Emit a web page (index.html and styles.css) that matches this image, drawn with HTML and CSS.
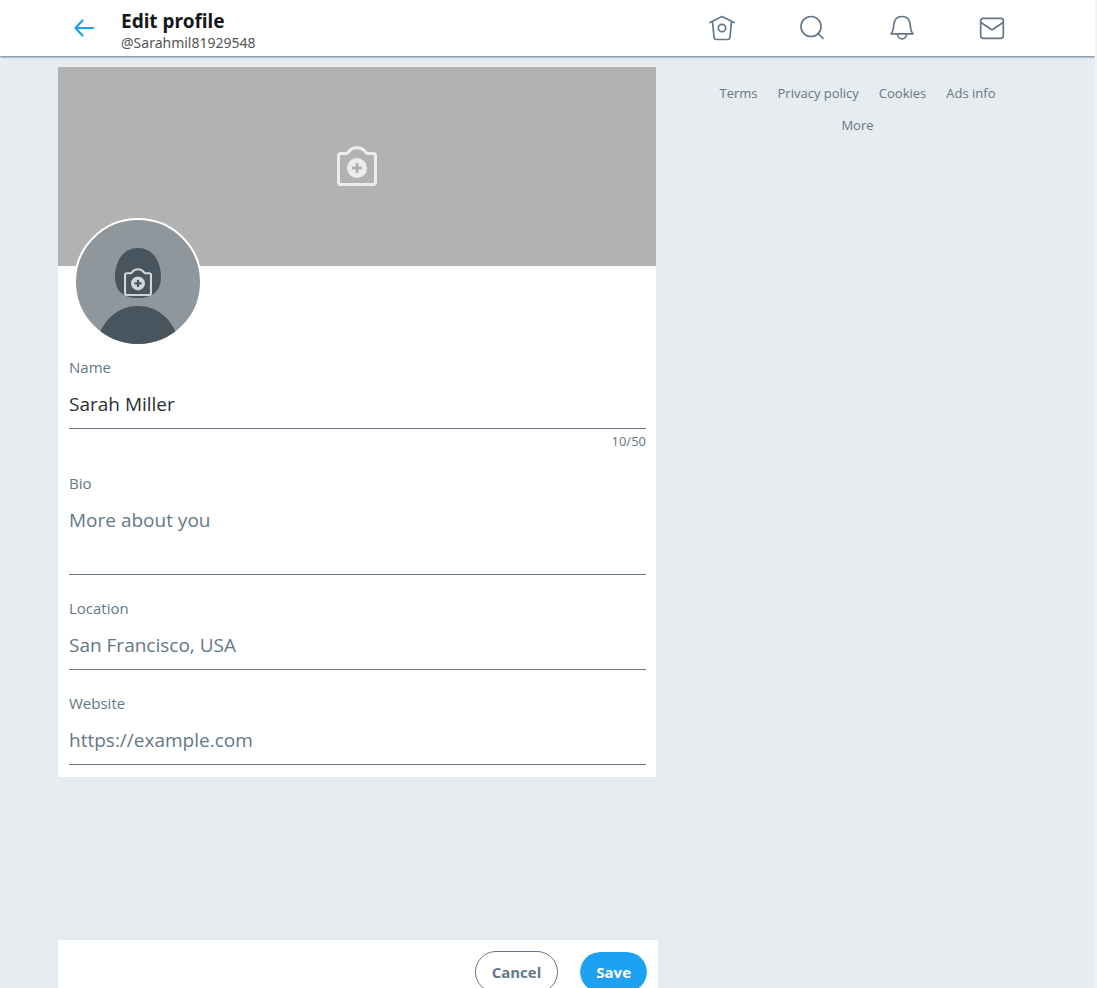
FILE: index.html
```html
<!DOCTYPE html>
<html lang="en">
<head>
<meta charset="utf-8">
<meta name="viewport" content="width=device-width, initial-scale=1">
<title>Edit profile</title>
<link rel="stylesheet" href="styles.css">
</head>
<body>
<svg class="sprite" aria-hidden="true">
  <symbol id="camera" viewBox="0 0 40 40">
    <path d="M4 7.500h5.500q1-.2 1.800-1.300c4-6 13.400-6 17.400 0q.8 1.100 1.800 1.300H36q2.500 0 2.500 2.500v26q0 2.500-2.500 2.500H4q-2.500 0-2.500-2.500V10Q1.500 7.500 4 7.500z" fill="none" stroke="currentColor" stroke-width="3" stroke-linejoin="round"/>
    <path fill-rule="evenodd" fill="currentColor" d="M20 12a10 10 0 1 0 0 20a10 10 0 0 0 0-20zM18.500 17h3v3.500H25v3h-3.500V27h-3v-3.500H15v-3h3.500z"/>
  </symbol>
</svg>
<header class="topbar">
  <div class="topbar-inner">
    <div class="heading">
      <button class="back" type="button" aria-label="Back">
        <svg width="20" height="18" viewBox="0 0 20 18" fill="none" stroke="currentColor" stroke-width="2.200" stroke-linecap="round" stroke-linejoin="round"><path d="M19 9H1.500M8.500 1.500L1.500 9l7 7.500"/></svg>
      </button>
      <div class="heading-text">
        <h1 class="title">Edit profile</h1>
        <p class="handle">@Sarahmil81929548</p>
      </div>
    </div>
    <nav class="nav" aria-label="Primary">
      <a class="nav-link" href="#" aria-label="Home"><svg class="icon" viewBox="0 0 26 26"><path d="M1 7.500L13 1.500l12 6M3.500 6.500l1.500 15.500q.2 2.500 2.500 2.500h11q2.300 0 2.500-2.500l1.500-15.500"/><circle cx="13" cy="13" r="3.700"/></svg></a>
      <a class="nav-link" href="#" aria-label="Search"><svg class="icon" viewBox="0 0 26 26"><circle cx="12" cy="11.500" r="10"/><path d="M19 18.500l5 5"/></svg></a>
      <a class="nav-link" href="#" aria-label="Notifications"><svg class="icon" viewBox="0 0 26 26"><path d="M2 18.800h22c-2-2-2.400-4-2.800-9C20.800 4.500 17.500 1.500 13 1.500S5.200 4.500 4.800 9.800c-.4 5-.8 7-2.800 9zM8.500 19c0 6.500 9 6.500 9 0"/></svg></a>
      <a class="nav-link" href="#" aria-label="Messages"><svg class="icon" viewBox="0 0 26 26"><rect x="1.700" y="3.300" width="22.600" height="20" rx="2.500"/><path d="M2 7.500l9.500 6.500q1.500 1 3 0l9.500-6.500"/></svg></a>
    </nav>
  </div>
</header>
<div class="page">
  <main class="main">
    <form class="card" id="profile">
      <button class="banner" type="button" aria-label="Add a header photo"><svg class="camera-large"><use href="#camera"/></svg></button>
      <button class="avatar" type="button" aria-label="Add a profile photo">
        <svg class="person" viewBox="0 0 124 124"><path fill="#48545e" d="M62 28c16 0 23 15 23 29 0 14-8 21-23 21S39 71 39 57c0-14 7-29 23-29zM23 116c5-17 20-30 39-30s34 13 39 30v10H23z"/></svg>
        <svg class="camera-small"><use href="#camera"/></svg>
      </button>
      <div class="fields">
        <div class="field">
          <label class="label" for="name">Name</label>
          <input class="control" id="name" type="text" value="Sarah Miller" maxlength="50">
          <div class="counter">10/50</div>
        </div>
        <div class="field">
          <label class="label" for="bio">Bio</label>
          <textarea class="control control-multi" id="bio" placeholder="More about you"></textarea>
        </div>
        <div class="field">
          <label class="label" for="location">Location</label>
          <input class="control" id="location" type="text" placeholder="San Francisco, USA">
        </div>
        <div class="field">
          <label class="label" for="website">Website</label>
          <input class="control" id="website" type="url" placeholder="https://example.com">
        </div>
      </div>
    </form>
    <div class="actions">
      <button class="button" type="button">Cancel</button>
      <button class="button button-primary" type="submit" form="profile">Save</button>
    </div>
  </main>
  <aside class="links">
    <a class="link" href="#">Terms</a>
    <a class="link" href="#">Privacy policy</a>
    <a class="link" href="#">Cookies</a>
    <a class="link" href="#">Ads info</a>
    <a class="link" href="#">More</a>
  </aside>
</div>
</body>
</html>
```
FILE: styles.css
```css
* { box-sizing: border-box; }

body {
  margin: 0;
  height: 100vh;
  display: flex;
  flex-direction: column;
  overflow: hidden;
  border-right: 2px solid #f1f2f3;
  background: #e6ecf0;
  color: #657786;
  font-family: "Open Sans", "Noto Sans", sans-serif;
  font-size: 15px;
}

button {
  padding: 0;
  border: 0;
  background: none;
  font: inherit;
  cursor: pointer;
}

a { color: inherit; text-decoration: none; }
svg { display: block; }
.sprite { display: none; }

.topbar {
  flex: none;
  background: #fff;
  box-shadow: 0 1px 2px #657786;
}

.topbar-inner,
.page {
  display: grid;
  grid-template-columns: minmax(0, 1fr) 363px;
  column-gap: 18px;
  margin: 0 56px 0 58px;
}

.topbar-inner { height: 56px; }

.heading { display: flex; align-items: center; gap: 27px; padding-left: 16px; }
.heading-text { padding-top: 6px; }
.back { color: #1da1f2; }

.title {
  margin: 0;
  color: #14171a;
  font-family: "Noto Sans", sans-serif;
  font-size: 19px;
  line-height: 24px;
}

.handle {
  margin: 0;
  color: #555;
  font-family: "Noto Sans", sans-serif;
  font-size: 14px;
  line-height: 20px;
}

.nav { display: grid; grid-template-columns: repeat(4, 90px); padding-left: 1px; }
.nav-link { display: grid; place-items: center; }

.icon {
  width: 26px;
  height: 26px;
  fill: none;
  stroke: #657786;
  stroke-width: 1.7;
  stroke-linecap: round;
  stroke-linejoin: round;
}

.page { flex: 1; min-height: 0; padding-top: 11px; }

.main { display: flex; flex-direction: column; justify-content: space-between; min-height: 0; }

.card { position: relative; flex: none; margin-right: 2px; background: #fff; }

.banner {
  display: grid;
  place-items: center;
  width: 100%;
  height: 199px;
  padding-bottom: 1px;
  background: #b2b2b2;
}

.camera-large { width: 40px; height: 40px; color: #ededed; }

.avatar {
  position: absolute;
  top: 151px;
  left: 16px;
  display: grid;
  place-items: center;
  width: 128px;
  height: 128px;
  border: 2px solid #fff;
  border-radius: 50%;
  background: #8f969c;
  overflow: hidden;
}

.person,
.camera-small { grid-area: 1 / 1; }
.person { width: 124px; height: 124px; }
.camera-small { width: 28px; height: 28px; color: #d2d5d8; }

.fields { padding: 90px 10px 12px 11px; }
.field + .field { padding-top: 22px; }
.label { display: block; padding-bottom: 2px; line-height: 22px; }

.control {
  display: block;
  width: 100%;
  height: 49px;
  padding: 12px 0;
  border: 0;
  border-bottom: 1px solid #657786;
  border-radius: 0;
  outline: 0;
  background: none;
  color: #292f33;
  font: inherit;
  font-size: 19px;
  line-height: 24px;
}

.control::placeholder { color: #657786; opacity: 1; }
.control-multi { height: 79px; resize: none; }
.counter { height: 21px; font-size: 13px; line-height: 24px; text-align: right; }

.actions {
  flex: none;
  display: flex;
  justify-content: flex-end;
  align-items: flex-start;
  gap: 21px;
  height: 64px;
  margin-bottom: -16px;
  padding: 11px 10px 11px 0;
  background: #fff;
}

.button {
  height: 42px;
  padding: 0 16px;
  border: 1px solid #657786;
  border-radius: 21px;
  color: #657786;
  font-size: 15px;
  font-weight: 700;
}

.button-primary { border-color: #fff; background: #1da1f2; background-clip: padding-box; color: #fff; }

.links {
  display: flex;
  flex-wrap: wrap;
  align-content: flex-start;
  justify-content: center;
  column-gap: 20px;
  padding: 10px 30px;
  font-size: 13px;
  line-height: 32px;
}
```
